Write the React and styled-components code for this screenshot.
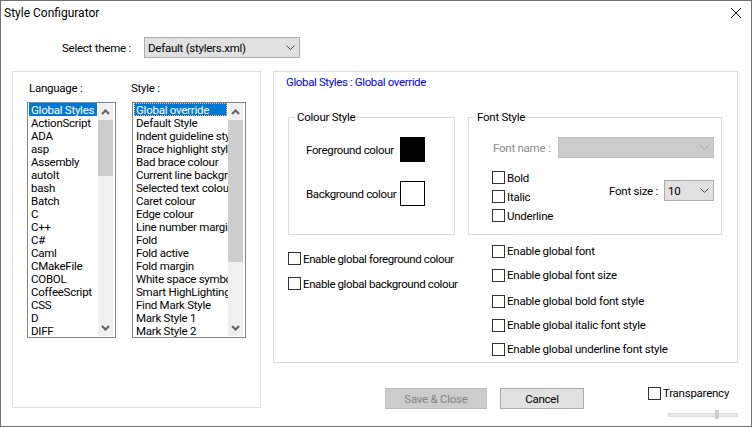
import React from 'react';
import styled, { createGlobalStyle } from 'styled-components';

const GlobalStyle = createGlobalStyle`
	* {
		box-sizing: border-box;
	}
	html, body {
		margin: 0;
		padding: 0;
		background: #fff;
		overflow: hidden;
	}
	body {
		font-family: Roboto, 'Liberation Sans', sans-serif;
		font-size: 11.5px;
		letter-spacing: -0.25px;
		color: #000;
	}
`;

const languages = ['Global Styles', 'ActionScript', 'ADA', 'asp', 'Assembly', 'autoIt', 'bash', 'Batch', 'C', 'C++', 'C#', 'Caml', 'CMakeFile', 'COBOL', 'CoffeeScript', 'CSS', 'D', 'DIFF'];
const styleNames = ['Global override', 'Default Style', 'Indent guideline style', 'Brace highlight style', 'Bad brace colour', 'Current line background', 'Selected text colour', 'Caret colour', 'Edge colour', 'Line number margin', 'Fold', 'Fold active', 'Fold margin', 'White space symbol', 'Smart HighLighting', 'Find Mark Style', 'Mark Style 1', 'Mark Style 2'];

const Window = styled.div`
	width: 752px;
	height: 427px;
	border: 1px solid #707070;
	display: flex;
	flex-direction: column;
	overflow: hidden;
`;

const TitleBar = styled.div`
	height: 36px;
	flex: none;
	display: flex;
	justify-content: space-between;
	padding: 5px 10px 0 3px;
	font-size: 12px;
	letter-spacing: 0;
	line-height: 14px;
`;

const CloseButton = styled.svg`
	width: 10px;
	height: 10px;
	margin-top: 2px;
	stroke: #111;
	stroke-width: 1;
	fill: none;
`;

const ThemeRow = styled.div`
	display: flex;
	align-items: center;
	padding-left: 61px;
	height: 21px;
	flex: none;
`;

const ThemeLabel = styled.span`
	width: 82px;
`;

const Select = styled.div`
	width: ${(p) => p.$width}px;
	height: 21px;
	flex: none;
	display: flex;
	align-items: center;
	justify-content: space-between;
	padding: 0 4px 0 3px;
	background: ${(p) => (p.$disabled ? '#cccccc' : '#e1e1e1')};
	border: 1px solid ${(p) => (p.$disabled ? '#bfbfbf' : '#adadad')};
	color: #000;
`;

const Chevron = styled.svg`
	width: 9px;
	height: 5px;
	fill: none;
	stroke: ${(p) => (p.$disabled ? '#a0a0a0' : '#444')};
	stroke-width: 1;
`;

const Main = styled.div`
	display: flex;
	gap: 12px;
	margin-top: 13px;
	padding-left: 11px;
`;

const LeftPanel = styled.div`
	width: 249px;
	height: 337px;
	flex: none;
	border: 1px solid #dcdcdc;
	display: flex;
	gap: 16px;
	padding: 9px 0 0 14px;
`;

const ListColumn = styled.div`
	display: flex;
	flex-direction: column;
	width: ${(p) => p.$width}px;
`;

const ListLabel = styled.div`
	height: 14px;
	line-height: 14px;
	margin: 0 0 7px ${(p) => p.$indent}px;
`;

const ListBox = styled.div`
	height: 236px;
	border: 1px solid #828790;
	padding: 0 2px 0 1px;
	display: flex;
	overflow: hidden;
`;

const ListItems = styled.div`
	flex: 1;
	min-width: 0;
	overflow: hidden;
`;

const ListItem = styled.div`
	height: 13px;
	line-height: 14px;
	padding-left: 2px;
	white-space: nowrap;
	overflow: hidden;
	width: ${(p) => (p.$selected ? `${p.$selectedWidth}px` : 'auto')};
	background: ${(p) => (p.$selected ? '#0078d7' : 'transparent')};
	color: ${(p) => (p.$selected ? '#fff' : '#000')};
	outline: ${(p) => (p.$focused ? '1px dotted #ffb060' : 'none')};
	outline-offset: -1px;
`;

const Scrollbar = styled.div`
	width: 15px;
	flex: none;
	margin-bottom: 1px;
	background: #f0f0f0;
	display: flex;
	flex-direction: column;
`;

const ScrollButton = styled.div`
	height: 17px;
	flex: none;
	display: flex;
	align-items: center;
	justify-content: center;
`;

const ScrollThumb = styled.div`
	height: ${(p) => p.$height}px;
	flex: none;
	background: #cdcdcd;
`;

const ScrollTrack = styled.div`
	flex: 1;
`;

const ScrollArrow = styled.svg`
	width: 9px;
	height: 6px;
	fill: none;
	stroke: #606060;
	stroke-width: 2;
`;

const RightColumn = styled.div`
	display: flex;
	flex-direction: column;
	width: 465px;
	flex: none;
`;

const RightPanel = styled.div`
	height: 292px;
	border: 1px solid #dcdcdc;
	padding: 3px 0 0 12px;
`;

const PanelTitle = styled.div`
	height: 14px;
	line-height: 14px;
	letter-spacing: -0.38px;
	color: #0000ff;
`;

const Groups = styled.div`
	display: flex;
	gap: 13px;
	margin: 28px 0 0 2px;
`;

const Group = styled.div`
	position: relative;
	width: ${(p) => p.$width}px;
	height: 118px;
	flex: none;
	border: 1px solid #dcdcdc;
	padding-top: 19px;
`;

const GroupLegend = styled.span`
	position: absolute;
	top: -8px;
	left: 6px;
	padding: 0 2px;
	line-height: 14px;
	background: #fff;
`;

const ColourRows = styled.div`
	display: flex;
	flex-direction: column;
	gap: 19px;
	padding-left: 17px;
`;

const ColourRow = styled.div`
	display: flex;
	align-items: center;
`;

const ColourLabel = styled.span`
	width: 94px;
	letter-spacing: -0.35px;
	white-space: nowrap;
`;

const Swatch = styled.div`
	width: 25px;
	height: 25px;
	border: 1px solid #000;
	background: ${(p) => p.$colour};
`;

const FontNameRow = styled.div`
	display: flex;
	align-items: center;
	padding-left: 24px;
`;

const FontNameLabel = styled.span`
	width: 65px;
	color: #8a8a8a;
`;

const FontOptions = styled.div`
	display: flex;
	justify-content: space-between;
	margin-top: 10px;
	padding: 0 7px 0 23px;
`;

const FontChecks = styled.div`
	display: flex;
	flex-direction: column;
`;

const FontSize = styled.div`
	display: flex;
	align-items: center;
	margin-top: 12px;
	height: 21px;
`;

const FontSizeLabel = styled.span`
	width: 55px;
`;

const CheckRow = styled.label`
	display: flex;
	align-items: center;
	gap: 2px;
	height: ${(p) => p.$height}px;
	margin-top: ${(p) => p.$top || 0}px;
	white-space: nowrap;
`;

const CheckBox = styled.span`
	width: 13px;
	height: 13px;
	flex: none;
	border: 1px solid #333;
	background: #fff;
`;

const Enables = styled.div`
	display: flex;
	margin-left: 2px;
`;

const EnableLeft = styled.div`
	width: 204px;
	flex: none;
	padding-top: 11px;
	letter-spacing: -0.4px;
`;

const EnableRight = styled.div`
	padding-top: 4px;
`;

const Footer = styled.div`
	display: flex;
	align-items: flex-start;
	margin-top: 25px;
	padding-left: 112px;
`;

const Button = styled.div`
	width: ${(p) => p.$width}px;
	height: 21px;
	flex: none;
	margin-right: ${(p) => p.$right || 0}px;
	display: flex;
	align-items: center;
	justify-content: center;
	background: ${(p) => (p.$disabled ? '#cccccc' : '#e1e1e1')};
	border: 1px solid ${(p) => (p.$disabled ? '#bfbfbf' : '#adadad')};
	color: ${(p) => (p.$disabled ? '#838383' : '#000')};
`;

const TransparencyBox = styled.div`
	margin: -2px 0 0 64px;
	display: flex;
	flex-direction: column;
`;

const SliderTrack = styled.div`
	position: relative;
	width: 70px;
	height: 4px;
	margin: 13px 0 0 20px;
	background: #e7e7e7;
	border: 1px solid #dcdcdc;
`;

const SliderThumb = styled.div`
	position: absolute;
	left: 46px;
	top: -4px;
	width: 4px;
	height: 9px;
	background: #cdcdcd;
`;

const SelectChevron = ({ disabled }) => (
	<Chevron viewBox='0 0 9 5' $disabled={disabled}>
		<polyline points='0.5,0.5 4.5,4.5 8.5,0.5' />
	</Chevron>
);

const ScrollBarPart = ({ thumb }) => (
	<Scrollbar>
		<ScrollButton>
			<ScrollArrow viewBox='0 0 9 6'>
				<polyline points='1,5 4.5,1.5 8,5' />
			</ScrollArrow>
		</ScrollButton>
		<ScrollThumb $height={thumb} />
		<ScrollTrack />
		<ScrollButton>
			<ScrollArrow viewBox='0 0 9 6'>
				<polyline points='1,1 4.5,4.5 8,1' />
			</ScrollArrow>
		</ScrollButton>
	</Scrollbar>
);

const Check = ({ label, height = 14, top }) => (
	<CheckRow $height={height} $top={top}>
		<CheckBox />
		{label}
	</CheckRow>
);

export default function App() {
	return (
		<>
			<GlobalStyle />
			<Window>
				<TitleBar>
					Style Configurator
					<CloseButton viewBox='0 0 10 10'>
						<path d='M0 0 L10 10 M10 0 L0 10' />
					</CloseButton>
				</TitleBar>
				<ThemeRow>
					<ThemeLabel>Select theme :</ThemeLabel>
					<Select $width={156}>
						Default (stylers.xml)
						<SelectChevron />
					</Select>
				</ThemeRow>
				<Main>
					<LeftPanel>
						<ListColumn $width={89}>
							<ListLabel $indent={2}>Language :</ListLabel>
							<ListBox>
								<ListItems>
									{languages.map((name, i) => (
										<ListItem key={name} $selected={i === 0} $selectedWidth={68}>
											{name}
										</ListItem>
									))}
								</ListItems>
								<ScrollBarPart thumb={56} />
							</ListBox>
						</ListColumn>
						<ListColumn $width={114}>
							<ListLabel $indent={-1}>Style :</ListLabel>
							<ListBox>
								<ListItems>
									{styleNames.map((name, i) => (
										<ListItem key={name} $selected={i === 0} $focused={i === 0} $selectedWidth={93}>
											{name}
										</ListItem>
									))}
								</ListItems>
								<ScrollBarPart thumb={142} />
							</ListBox>
						</ListColumn>
					</LeftPanel>
					<RightColumn>
						<RightPanel>
							<PanelTitle>Global Styles : Global override</PanelTitle>
							<Groups>
								<Group $width={167}>
									<GroupLegend>Colour Style</GroupLegend>
									<ColourRows>
										<ColourRow>
											<ColourLabel>Foreground colour</ColourLabel>
											<Swatch $colour='#000' />
										</ColourRow>
										<ColourRow>
											<ColourLabel>Background colour</ColourLabel>
											<Swatch $colour='#fff' />
										</ColourRow>
									</ColourRows>
								</Group>
								<Group $width={254}>
									<GroupLegend>Font Style</GroupLegend>
									<FontNameRow>
										<FontNameLabel>Font name :</FontNameLabel>
										<Select $width={156} $disabled>
											<span />
											<SelectChevron disabled />
										</Select>
									</FontNameRow>
									<FontOptions>
										<FontChecks>
											<Check label='Bold' height={19} />
											<Check label='Italic' height={19} />
											<Check label='Underline' height={19} />
										</FontChecks>
										<FontSize>
											<FontSizeLabel>Font size :</FontSizeLabel>
											<Select $width={50}>
												10
												<SelectChevron />
											</Select>
										</FontSize>
									</FontOptions>
								</Group>
							</Groups>
							<Enables>
								<EnableLeft>
									<Check label='Enable global foreground colour' height={25} />
									<Check label='Enable global background colour' height={25} />
								</EnableLeft>
								<EnableRight>
									<Check label='Enable global font' height={24} />
									<Check label='Enable global font size' height={24} />
									<Check label='Enable global bold font style' height={24} top={2} />
									<Check label='Enable global italic font style' height={24} />
									<Check label='Enable global underline font style' height={24} />
								</EnableRight>
							</Enables>
						</RightPanel>
						<Footer>
							<Button $width={102} $right={13} $disabled>
								Save &amp; Close
							</Button>
							<Button $width={84}>Cancel</Button>
							<TransparencyBox>
								<Check label='Transparency' />
								<SliderTrack>
									<SliderThumb />
								</SliderTrack>
							</TransparencyBox>
						</Footer>
					</RightColumn>
				</Main>
			</Window>
		</>
	);
}
